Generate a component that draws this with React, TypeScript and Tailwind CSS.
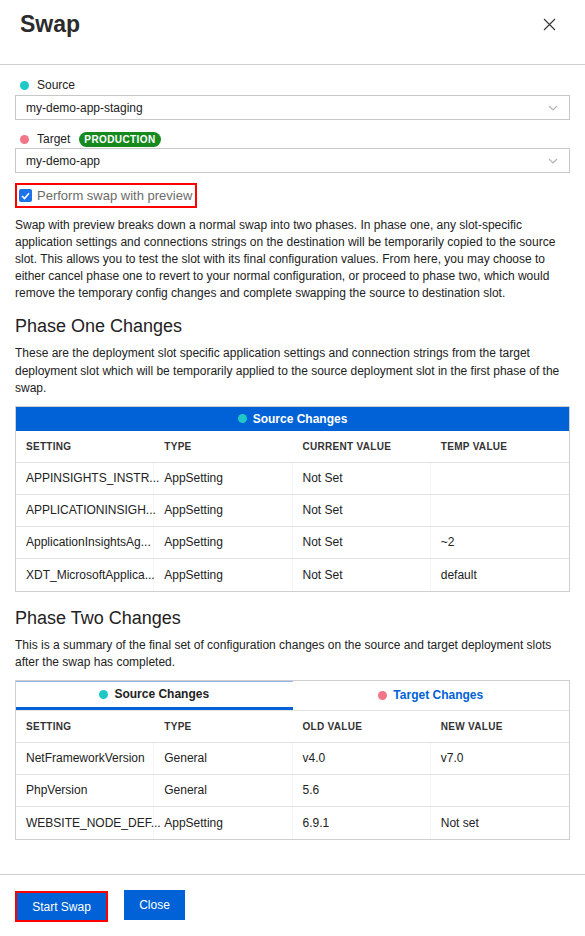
import React from 'react';

const font = { fontFamily: '"Liberation Sans", Arial, sans-serif' };

function Chevron() {
  return (
    <svg width="10" height="6" viewBox="0 0 10 6" className="text-[#b4b4b4]">
      <path d="M1 1l4 4 4-4" fill="none" stroke="currentColor" strokeWidth="1.2" />
    </svg>
  );
}

function SelectBox({ value }: { value: string }) {
  return (
    <div className="flex items-center justify-between h-[25px] border border-[#c8c8c8] pl-[10px] pr-[11px] text-[12px] text-[#222]">
      <span>{value}</span>
      <Chevron />
    </div>
  );
}

function Dot({ color }: { color: string }) {
  return <span className={`inline-block w-[9px] h-[9px] rounded-full ${color}`} />;
}

type Row = [string, string, string, string];

const phaseOne: Row[] = [
  ['APPINSIGHTS_INSTR...', 'AppSetting', 'Not Set', ''],
  ['APPLICATIONINSIGH...', 'AppSetting', 'Not Set', ''],
  ['ApplicationInsightsAg...', 'AppSetting', 'Not Set', '~2'],
  ['XDT_MicrosoftApplica...', 'AppSetting', 'Not Set', 'default'],
];

const phaseTwo: Row[] = [
  ['NetFrameworkVersion', 'General', 'v4.0', 'v7.0'],
  ['PhpVersion', 'General', '5.6', ''],
  ['WEBSITE_NODE_DEF...', 'AppSetting', '6.9.1', 'Not set'],
];

function Grid({ head, rows }: { head: Row; rows: Row[] }) {
  return (
    <div>
      <div className="grid grid-cols-4 h-[32px] items-center border-b border-[#e3e3e3]">
        {head.map((h) => (
          <div key={h} className="pl-[10px] text-[10px] font-bold tracking-[0.3px] text-[#333]">
            {h}
          </div>
        ))}
      </div>
      {rows.map((r, i) => (
        <div
          key={i}
          className={`grid grid-cols-4 h-[32px] ${i < rows.length - 1 ? 'border-b border-[#e3e3e3]' : ''}`}
        >
          {r.map((c, j) => (
            <div
              key={j}
              className={`flex items-center pl-[10px] text-[12px] text-[#222] ${j < 3 ? 'border-r border-[#f5f5f5]' : ''}`}
            >
              {c}
            </div>
          ))}
        </div>
      ))}
    </div>
  );
}

export default function App() {
  return (
    <div style={font} className="w-[585px] h-[936px] bg-white flex flex-col text-[#222]">
      {/* Header */}
      <div className="flex items-start justify-between h-[65px] border-b border-[#cfcfcf] pl-[20px] pr-[29px] pt-[9px]">
        <h1 className="text-[23px] font-semibold text-[#2b2b2b] leading-[30px]">Swap</h1>
        <svg width="13" height="13" viewBox="0 0 13 13" className="mt-[9px]">
          <path d="M1 1l11 11M12 1L1 12" stroke="#333" strokeWidth="1.1" />
        </svg>
      </div>

      {/* Body */}
      <div className="flex-1 px-[15px] pt-[12px]">
        <div className="flex items-center gap-[8px] pl-[5px] h-[16px] text-[12px]">
          <Dot color="bg-[#1fc7c7]" />
          <span>Source</span>
        </div>
        <div className="mt-[2px]">
          <SelectBox value="my-demo-app-staging" />
        </div>

        <div className="flex items-center gap-[8px] pl-[5px] h-[16px] mt-[11px] text-[12px]">
          <Dot color="bg-[#f27589]" />
          <span>Target</span>
          <span className="ml-[1px] rounded-full bg-[#178a1f] text-white text-[10px] font-bold tracking-[0.4px] px-[5px] h-[15px] leading-[15px]">
            PRODUCTION
          </span>
        </div>
        <div className="mt-[1px]">
          <SelectBox value="my-demo-app" />
        </div>

        <div className="mt-[10px] inline-flex items-center gap-[5px] border-2 border-[#f00] h-[25px] pl-[2px] pr-[3px]">
          <span className="w-[13px] h-[13px] rounded-[2px] bg-[#1a73e8] flex items-center justify-center">
            <svg width="9" height="8" viewBox="0 0 9 8">
              <path d="M1 4l2.5 2.5L8 1.2" fill="none" stroke="#fff" strokeWidth="1.6" />
            </svg>
          </span>
          <span className="text-[13px] text-[#6b6b6b]">Perform swap with preview</span>
        </div>

        <p className="mt-[9px] text-[12px] leading-[17px]">
          Swap with preview breaks down a normal swap into two phases. In phase one, any slot-specific
          application settings and connections strings on the destination will be temporarily copied to the source
          slot. This allows you to test the slot with its final configuration values. From here, you may choose to
          either cancel phase one to revert to your normal configuration, or proceed to phase two, which would
          remove the temporary config changes and complete swapping the source to destination slot.
        </p>

        <h2 className="mt-[12px] text-[18px] leading-[24px] text-[#222]">Phase One Changes</h2>
        <p className="mt-[7px] text-[12px] leading-[17.5px]">
          These are the deployment slot specific application settings and connection strings from the target
          deployment slot which will be temporarily applied to the source deployment slot in the first phase of the
          swap.
        </p>

        <div className="mt-[8px] border border-[#cfcfcf]">
          <div className="h-[24px] bg-[#0062d6] flex items-center justify-center gap-[6px] text-white text-[12px] font-bold">
            <Dot color="bg-[#1fc7c7]" />
            <span>Source Changes</span>
          </div>
          <Grid head={['SETTING', 'TYPE', 'CURRENT VALUE', 'TEMP VALUE']} rows={phaseOne} />
        </div>

        <h2 className="mt-[14px] text-[18px] leading-[24px] text-[#222]">Phase Two Changes</h2>
        <p className="mt-[7px] text-[12px] leading-[17px]">
          This is a summary of the final set of configuration changes on the source and target deployment slots
          after the swap has completed.
        </p>

        <div className="mt-[9px] border border-[#cfcfcf]">
          <div className="grid grid-cols-2 h-[30px] border-b border-[#e3e3e3]">
            <div className="flex items-center justify-center gap-[6px] border-t border-t-[#8fb4e6] border-b-[3px] border-b-[#0062d6] text-[12px] font-bold text-[#222]">
              <Dot color="bg-[#1fc7c7]" />
              <span>Source Changes</span>
            </div>
            <div className="flex items-center justify-center gap-[6px] text-[12px] font-bold text-[#0062d6]">
              <Dot color="bg-[#f27589]" />
              <span>Target Changes</span>
            </div>
          </div>
          <Grid head={['SETTING', 'TYPE', 'OLD VALUE', 'NEW VALUE']} rows={phaseTwo} />
        </div>
      </div>

      {/* Footer */}
      <div className="h-[62px] border-t border-[#cfcfcf] flex items-start gap-[16px] px-[15px] pt-[16px]">
        <button className="h-[31px] w-[93px] border-2 border-[#f00] bg-[#0062d6] text-white text-[12px]">
          Start Swap
        </button>
        <button className="h-[30px] w-[61px] bg-[#0062d6] text-white text-[12px] -mt-[1px]">Close</button>
      </div>
    </div>
  );
}
